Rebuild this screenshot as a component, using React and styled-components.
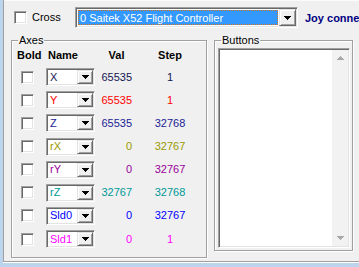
import React from 'react';
import styled, { createGlobalStyle } from 'styled-components';

const Global = createGlobalStyle`
  html, body { margin: 0; padding: 0; background: #bcd4ec; }
  body { font-family: "Liberation Sans", Arial, sans-serif; font-size: 11px; }
  * { box-sizing: border-box; }
`;

const Window = styled.div`
  width: 359px;
  height: 267px;
  background: #bcd4ec;
  overflow: hidden;
`;

const Client = styled.div`
  margin-left: 3px;
  height: 262px;
  background: #f0f0f0;
  border-left: 1px solid #a0a0a0;
  border-bottom: 1px solid #a0a0a0;
  box-shadow: 0 1px 0 #ffffff, inset 0 1px 0 #fbfbfb;
  display: flex;
  flex-direction: column;
  overflow: hidden;
`;

const TopRow = styled.div`
  display: flex;
  align-items: center;
  height: 21px;
  margin-top: 7px;
  margin-bottom: 6px;
  padding-left: 10px;
`;

const CheckLabel = styled.label`
  display: flex;
  align-items: center;
  gap: 5px;
  width: 61px;
  flex: none;
  color: #000;
  line-height: 13px;
`;

const Check = styled.span`
  display: inline-block;
  width: 13px;
  height: 13px;
  background: #fff;
  border: 1px solid;
  border-color: #a0a0a0 #ffffff #ffffff #a0a0a0;
  box-shadow: inset 1px 1px 0 #696969, inset -1px -1px 0 #e3e3e3;
  flex: none;
`;

const Combo = styled.div`
  display: flex;
  width: ${p => p.$w}px;
  height: ${p => p.$h}px;
  background: #fff;
  border: 1px solid;
  border-color: #a0a0a0 #ffffff #ffffff #a0a0a0;
  box-shadow: inset 1px 1px 0 #696969, inset -1px -1px 0 #e3e3e3;
  padding: 1px;
  flex: none;
`;

const ComboText = styled.div`
  flex: 1;
  display: flex;
  align-items: center;
  padding-left: 2px;
  color: ${p => p.$color || '#000'};
  white-space: nowrap;
  overflow: hidden;
`;

const Selection = styled.div`
  flex: 1;
  margin: 1px;
  display: flex;
  align-items: center;
  padding-left: 1px;
  background: #3399ff;
  color: #fff;
  border: 1px dotted #d07020;
  white-space: nowrap;
  overflow: hidden;
`;

const DropBtn = styled.div`
  width: ${p => p.$w}px;
  flex: none;
  display: flex;
  align-items: center;
  justify-content: center;
  background: #f0f0f0;
  border: 1px solid;
  border-color: #e3e3e3 #696969 #696969 #e3e3e3;
  box-shadow: inset 1px 1px 0 #ffffff, inset -1px -1px 0 #a0a0a0;
`;

const Arrow = ({ color = '#000', up = false }) => (
  <svg width="7" height="4" viewBox="0 0 7 4" shapeRendering="crispEdges">
    {up ? (
      <polygon points="3.5,0 7,4 0,4" fill={color} />
    ) : (
      <polygon points="0,0 7,0 3.5,4" fill={color} />
    )}
  </svg>
);

const JoyStatus = styled.span`
  margin-left: 7px;
  font-weight: bold;
  color: #000080;
  white-space: nowrap;
  flex: none;
`;

const GroupsRow = styled.div`
  display: flex;
  align-items: flex-start;
  gap: 7px;
  margin-left: 7px;
`;

const Group = styled.fieldset`
  margin: 0;
  padding: 0;
  min-width: 0;
  width: ${p => p.$w}px;
  height: ${p => (p.$h ? `${p.$h}px` : 'auto')};
  border: 1px solid #a0a0a0;
  box-shadow: inset 1px 1px 0 #fff, 1px 1px 0 #fff;
  flex: none;
`;

const Legend = styled.legend`
  margin-left: 6px;
  padding: 0 1px;
  line-height: 13px;
  font-size: 11px;
  color: #000;
`;

const AxesGrid = styled.div`
  display: grid;
  grid-template-columns: 31px 55px 37px 70px;
  grid-template-rows: 15px repeat(8, 18px);
  row-gap: 5.15px;
  margin-top: 1px;
  align-items: center;
`;

const Head = styled.div`
  font-weight: bold;
  line-height: 15px;
  color: #000;
  justify-self: ${p => p.$align || 'start'};
  margin-left: ${p => p.$ml || 0}px;
`;

const Cell = styled.div`
  display: flex;
  justify-content: ${p => p.$justify || 'flex-start'};
  align-items: center;
  padding-left: ${p => p.$pl || 0}px;
  padding-right: ${p => p.$pr || 0}px;
  color: ${p => p.$color || '#000'};
  line-height: 13px;
`;

const ListBox = styled.div`
  margin: 1px 2px 2px 3px;
  height: 200px;
  background: #fff;
  border: 1px solid;
  border-color: #a0a0a0 #ffffff #ffffff #a0a0a0;
  box-shadow: inset 1px 1px 0 #696969, inset -1px -1px 0 #e3e3e3;
  padding: 1px;
  display: flex;
  justify-content: flex-end;
`;

const ScrollBar = styled.div`
  width: 16px;
  background: #f2f2f2;
  display: flex;
  flex-direction: column;
  justify-content: space-between;
`;

const ScrollBtn = styled.div`
  height: 16px;
  display: flex;
  align-items: center;
  justify-content: center;
`;

const axes = [
  { name: 'X', val: '65535', step: '1', color: '#141450' },
  { name: 'Y', val: '65535', step: '1', color: '#ff0000' },
  { name: 'Z', val: '65535', step: '32768', color: '#1c1c96' },
  { name: 'rX', val: '0', step: '32767', color: '#999900' },
  { name: 'rY', val: '0', step: '32767', color: '#990099' },
  { name: 'rZ', val: '32767', step: '32768', color: '#009999' },
  { name: 'Sld0', val: '0', step: '32767', color: '#0000ff' },
  { name: 'Sld1', val: '0', step: '1', color: '#ff00ff' },
];

export default function App() {
  return (
    <Window>
      <Global />
      <Client>
        <TopRow>
          <CheckLabel>
            <Check />
            <span>Cross</span>
          </CheckLabel>
          <Combo $w={223} $h={21}>
            <Selection>0 Saitek X52 Flight Controller</Selection>
            <DropBtn $w={17}>
              <Arrow />
            </DropBtn>
          </Combo>
          <JoyStatus>Joy connected</JoyStatus>
        </TopRow>
        <GroupsRow>
          <Group $w={196} $h={224}>
            <Legend>Axes</Legend>
            <AxesGrid>
              <Head $ml={5}>Bold</Head>
              <Head $ml={5}>Name</Head>
              <Head $align="center">Val</Head>
              <Head $align="center">Step</Head>
              {axes.map(a => (
                <React.Fragment key={a.name}>
                  <Cell $pl={9}>
                    <Check />
                  </Cell>
                  <Cell $pl={3}>
                    <Combo $w={49} $h={18}>
                      <ComboText $color={a.color}>{a.name}</ComboText>
                      <DropBtn $w={16}>
                        <Arrow />
                      </DropBtn>
                    </Combo>
                  </Cell>
                  <Cell $justify="flex-end" $pr={3} $color={a.color}>
                    {a.val}
                  </Cell>
                  <Cell $justify="center" $color={a.color}>
                    {a.step}
                  </Cell>
                </React.Fragment>
              ))}
            </AxesGrid>
          </Group>
          <Group $w={139}>
            <Legend>Buttons</Legend>
            <ListBox>
              <ScrollBar>
                <ScrollBtn>
                  <Arrow up color="#a8a8a8" />
                </ScrollBtn>
                <ScrollBtn>
                  <Arrow color="#a8a8a8" />
                </ScrollBtn>
              </ScrollBar>
            </ListBox>
          </Group>
        </GroupsRow>
      </Client>
    </Window>
  );
}
